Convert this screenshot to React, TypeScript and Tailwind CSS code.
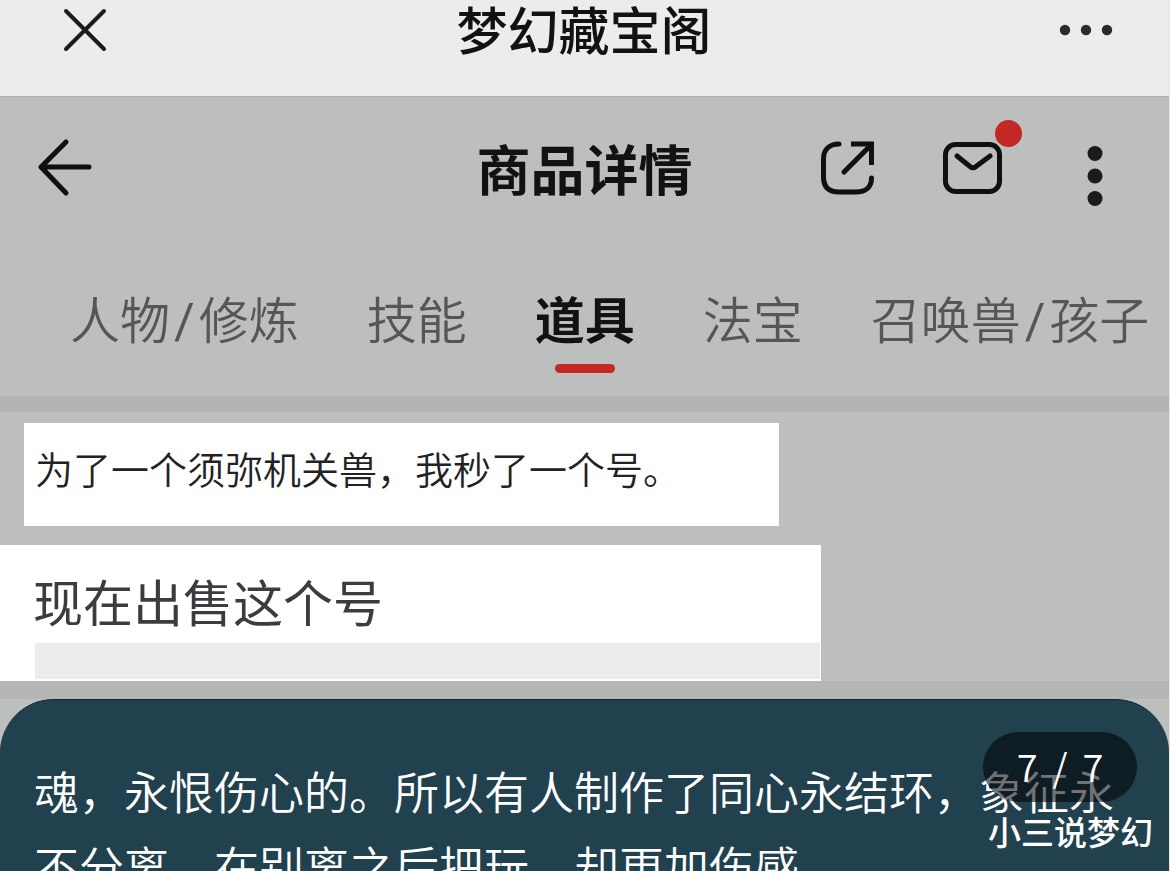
const tabs = [
  { parts: ["人物", "修炼"], active: false },
  { parts: ["技能"], active: false },
  { parts: ["道具"], active: true },
  { parts: ["法宝"], active: false },
  { parts: ["召唤兽", "孩子"], active: false },
];

function CloseIcon() {
  return (
    <svg width="44" height="44" viewBox="0 0 44 44" fill="none" stroke="#1b1c1c" strokeWidth="4" strokeLinecap="round">
      <path d="M3 3 41 41M41 3 3 41" />
    </svg>
  );
}

function MoreIcon() {
  return (
    <svg width="54" height="12" viewBox="0 0 54 12" fill="#2a2b2b">
      <circle cx="6" cy="6" r="5.2" />
      <circle cx="27" cy="6" r="5.2" />
      <circle cx="48" cy="6" r="5.2" />
    </svg>
  );
}

function BackIcon() {
  return (
    <svg width="56" height="60" viewBox="0 0 56 60" fill="none" stroke="#0f1111" strokeWidth="5" strokeLinecap="round" strokeLinejoin="round">
      <path d="M30 4 5 29 30 55M5 29H53" />
    </svg>
  );
}

function ShareIcon() {
  return (
    <svg width="64" height="64" viewBox="0 0 64 64" fill="none" stroke="#0f1111" strokeWidth="5">
      <path strokeLinecap="round" d="M24 8C14 8 8.500 14 8.500 23V41C8.500 51 14 56 24 56H41C51 56 56.500 51 56.500 42" />
      <path strokeLinecap="round" d="M29 36 55 10" />
      <path d="M36 8H56.500V29" />
    </svg>
  );
}

function MailIcon() {
  return (
    <svg width="64" height="64" viewBox="0 0 64 64" fill="none" stroke="#0f1111" strokeWidth="5" strokeLinecap="round" strokeLinejoin="round">
      <rect x="4.500" y="8.500" width="54" height="47" rx="10" />
      <path d="M16 20 29 30.500Q32 33 35 30.500L49 20" />
    </svg>
  );
}

function KebabIcon() {
  return (
    <svg width="16" height="62" viewBox="0 0 16 62" fill="#1a1b1b">
      <circle cx="8" cy="8.500" r="7.500" />
      <circle cx="8" cy="31" r="7.500" />
      <circle cx="8" cy="53.500" r="7.500" />
    </svg>
  );
}

export default function App() {
  return (
    <div className="flex h-screen flex-col overflow-hidden border-r border-[#e4e6e5] bg-[#bdbfbe] font-['Noto_Sans_CJK_SC',sans-serif] text-[#111313]">
      <header className="grid shrink-0 grid-cols-[1fr_auto_1fr] items-center bg-[#ebeded] pr-[56px] pb-9 pl-[63px]">
        <button aria-label="关闭" className="justify-self-start">
          <CloseIcon />
        </button>
        <h1 className="pr-2 pb-1 text-[51px] leading-[56px] font-medium">梦幻藏宝阁</h1>
        <button aria-label="更多" className="justify-self-end">
          <MoreIcon />
        </button>
      </header>

      <div className="grid shrink-0 grid-cols-[1fr_auto_1fr] items-center border-t border-[#aeb0af] px-9 pt-8">
        <button aria-label="返回" className="justify-self-start">
          <BackIcon />
        </button>
        <h2 className="text-[54px] leading-[76px] font-bold">商品详情</h2>
        <div className="flex items-center justify-self-end pr-[30px]">
          <button aria-label="分享" className="mr-[62px]">
            <ShareIcon />
          </button>
          <button aria-label="消息" className="relative mr-[82px]">
            <MailIcon />
            <span className="absolute -top-4 -right-[17px] size-[27px] rounded-full bg-[#c22824]" />
          </button>
          <button aria-label="菜单" className="pt-4">
            <KebabIcon />
          </button>
        </div>
      </div>

      <nav className="flex shrink-0 gap-[68px] pt-[74px] pb-[23px] pl-[70px] text-[50px] leading-[72px] whitespace-nowrap">
        {tabs.map((tab) => (
          <a
            key={tab.parts[0]}
            href="#"
            aria-current={tab.active ? "page" : undefined}
            className={
              tab.active
                ? "flex shrink-0 flex-col items-center gap-[11px] font-bold"
                : "flex shrink-0 flex-col items-center font-[350] text-[#555756]"
            }
          >
            <span>
              {tab.parts[0]}
              {tab.parts[1] && <span className="mx-1 font-[Roboto] font-normal">/</span>}
              {tab.parts[1]}
            </span>
            {tab.active && <span className="h-[9px] w-[60px] rounded-full bg-[#c42824]" />}
          </a>
        ))}
      </nav>

      <div className="h-4 shrink-0 bg-[#b3b5b4]" />

      <main className="flex min-h-0 flex-1 flex-col">
        <p className="mt-[11px] ml-6 w-[755px] shrink-0 bg-white pt-[15px] pb-7 pl-[11px] text-[38px] leading-[60px] font-[350] text-[#222]">
          为了一个须弥机关兽，我秒了一个号。
        </p>
        <section className="mt-[19px] w-[821px] shrink-0 bg-white pr-px pb-[2px] pl-[35px]">
          <p className="-ml-0.5 pt-5 pb-2 text-[50px] leading-[70px] text-[#3a3c40]">现在出售这个号</p>
          <div className="h-9 bg-[#ebedec]" />
        </section>
        <div className="h-[18px] shrink-0 bg-[#b5b6b6]" />

        <article className="relative min-h-0 flex-1 overflow-hidden rounded-t-[54px] border-t border-[#12262e] bg-[#21414e] pt-[53px] pl-[34px]">
          <p className="text-[45px] leading-[75px] font-[350] whitespace-nowrap text-white">
            魂，永恨伤心的。所以有人制作了同心永结环，象征永
            <br />
            不分离，在别离之后把玩，却更加伤感
          </p>
          <span className="absolute top-8 right-8 flex h-[70px] w-[154px] items-center justify-center gap-[15px] rounded-full bg-black/55 pb-1 text-[38px] font-[350] text-white">
            <span>7</span>
            <span>/</span>
            <span>7</span>
          </span>
          <span className="absolute top-[107px] right-4 text-[33px] leading-[48px] font-medium text-white">小三说梦幻</span>
        </article>
      </main>
    </div>
  );
}
